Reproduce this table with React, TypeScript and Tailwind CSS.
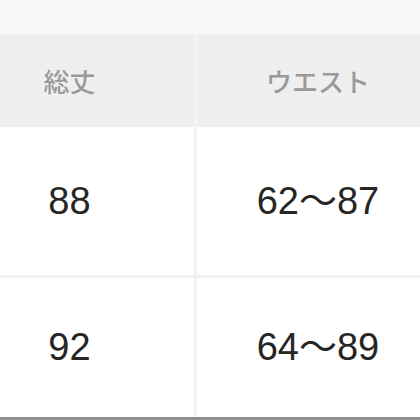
const rows = [
  { length: "88", waist: "62〜87" },
  { length: "92", waist: "64〜89" },
]

export default function App() {
  return (
    <div className="w-[420px] h-[420px] overflow-hidden bg-[#f8f8f8] flex flex-col">
      {/* top strip */}
      <div className="h-[34px] shrink-0" />

      {/* size table, cropped at both sides */}
      <div className="ml-[-55px] w-[502px] grid grid-cols-[249px_242px] gap-x-[3px] h-[93px] bg-[#f4f4f4]">
        <div className="flex items-center justify-center bg-[#efefef] text-[26px] font-medium text-[#9a9a9a] font-['Noto_Sans_CJK_JP',sans-serif]">
          総丈
        </div>
        <div className="flex items-center justify-center bg-[#efefef] text-[26px] font-medium text-[#9a9a9a] font-['Noto_Sans_CJK_JP',sans-serif]">
          ウエスト
        </div>
      </div>

      <div className="ml-[-55px] w-[502px] flex flex-col bg-[#f1f1f1] gap-y-[3px]">
        {rows.map((r, i) => (
          <div
            key={r.length}
            className={`grid grid-cols-[249px_242px] gap-x-[3px] ${i === 0 ? "h-[148px]" : "h-[139px]"}`}
          >
            <div className="flex items-center justify-center bg-white text-[38px] text-[#262626] font-['Liberation_Sans','Noto_Sans_CJK_JP',sans-serif]">
              {r.length}
            </div>
            <div className="flex items-center justify-center bg-white text-[38px] text-[#262626] font-['Liberation_Sans','Noto_Sans_CJK_JP',sans-serif]">
              {r.waist}
            </div>
          </div>
        ))}
      </div>

      <div className="h-[3px] shrink-0 bg-[#8f8f8f]" />
    </div>
  )
}
